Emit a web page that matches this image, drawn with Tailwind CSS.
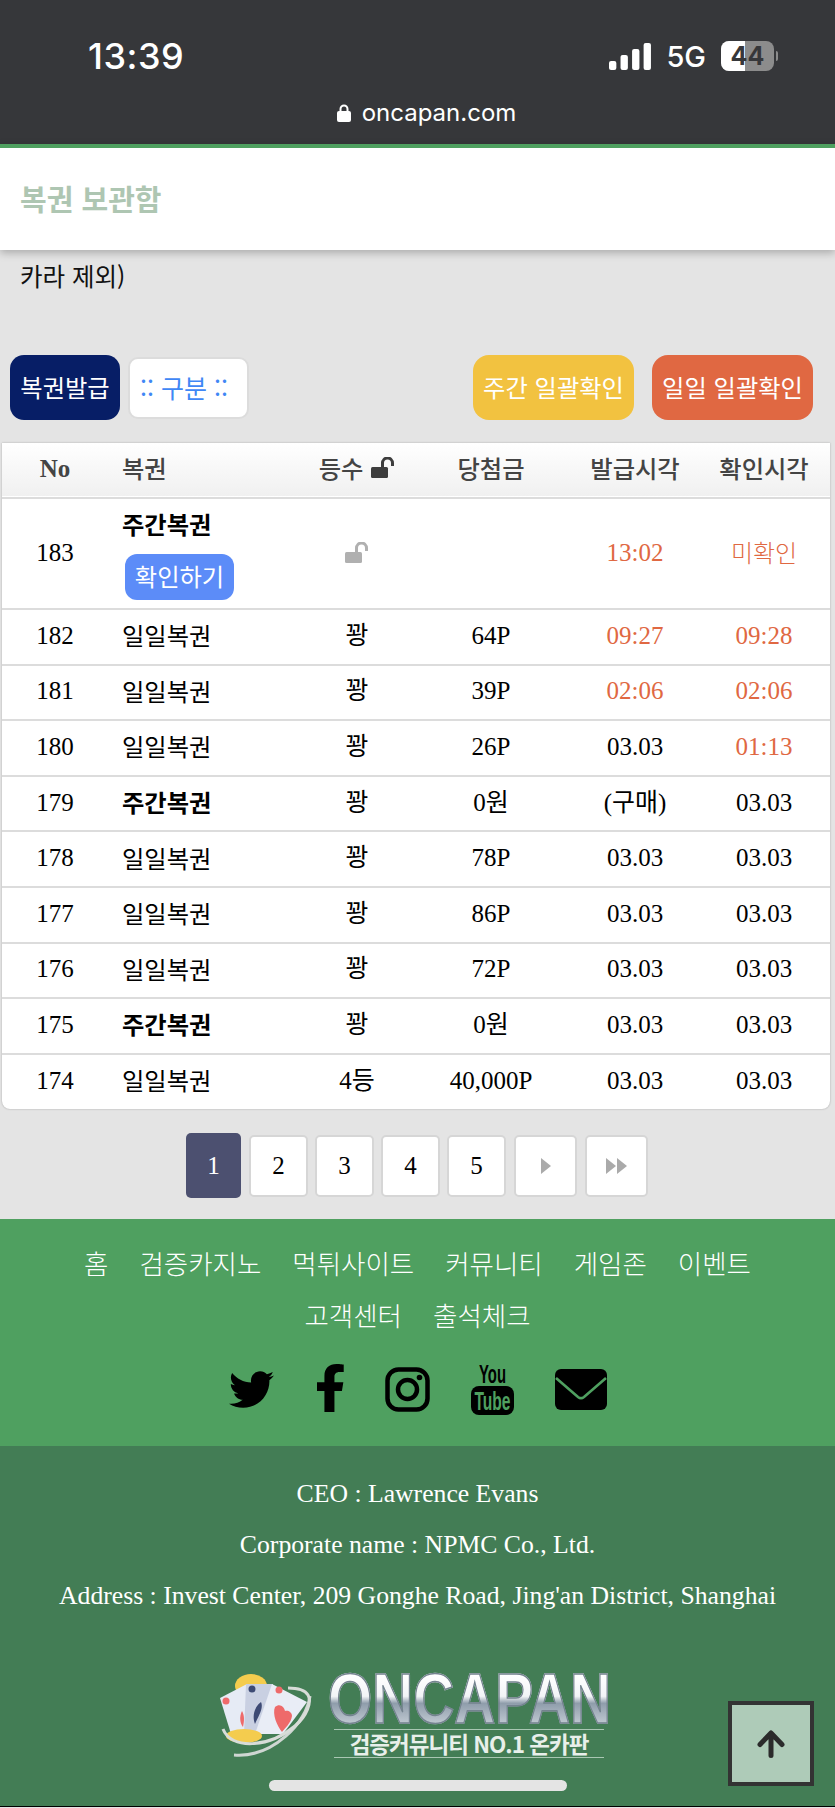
<!DOCTYPE html>
<html lang="ko">
<head>
  <meta charset="UTF-8" />
  <meta name="viewport" content="width=device-width, initial-scale=1.0"/>
  <title>복권 보관함 - 온카판</title>
  <script src="https://cdn.jsdelivr.net/npm/@tailwindcss/browser@4"></script>
</head>
<body class="bg-[#e4e4e4]">
  <div class="relative w-[835px] h-[1808px] overflow-hidden bg-[#e4e4e4] font-['Liberation_Serif','Noto_Sans_CJK_KR',serif] text-[25px] text-black">

    <!-- 상태바 -->
    <div class="h-[144px] bg-[#36373a] text-white font-['Inter','Noto_Sans',sans-serif]">
      <div class="flex items-center justify-between h-[112px] pl-[88px] pr-[57px]">
        <span class="text-[36px] font-medium leading-none tracking-[0.5px]">13:39</span>
        <div class="flex items-center">
          <svg class="w-[43px] h-[27px]" viewBox="0 0 41 27" preserveAspectRatio="none" fill="#fff">
            <rect x="0" y="18" width="7" height="9" rx="2"/>
            <rect x="11" y="12" width="7" height="15" rx="2"/>
            <rect x="22" y="6" width="7" height="21" rx="2"/>
            <rect x="33" y="0" width="7" height="27" rx="2"/>
          </svg>
          <span class="ml-[14px] text-[29px] font-medium leading-none">5G</span>
          <div class="relative ml-[15px] w-[53px] h-[30px] rounded-[8px] overflow-hidden flex bg-[#8c8c8c]">
            <div class="w-[24px] bg-white"></div>
            <span class="absolute inset-0 flex items-center justify-center text-[25px] font-bold leading-none text-[#36373a]">44</span>
          </div>
          <div class="ml-[2px] w-[2px] h-[10px] rounded-r bg-[#8c8c8c]"></div>
        </div>
      </div>
      <div class="flex items-center justify-center gap-[11px] pl-[18px] -mt-[11px]">
        <svg class="w-[14px] h-[18px]" viewBox="0 0 14 18" fill="#fff">
          <rect x="0" y="7" width="14" height="11" rx="2"/>
          <path d="M3.5 8V5a3.5 3.5 0 0 1 7 0v3" fill="none" stroke="#fff" stroke-width="2"/>
        </svg>
        <span class="text-[24px] leading-none font-['Inter',sans-serif]">oncapan.com</span>
      </div>
    </div>

    <!-- 헤더 -->
    <div class="h-[106px] border-t-[4px] border-[#4fa060] bg-white pl-5 flex items-center shadow-[0_3px_8px_rgba(0,0,0,0.25)] relative">
      <h1 class="text-[29px] font-bold leading-none pb-[2px] text-[#aec6b2] font-['Noto_Sans_CJK_KR',sans-serif]">복권 보관함</h1>
    </div>

    <p class="pl-5 mt-[9px] text-[24.5px] leading-[34px] text-[#111] font-['Noto_Sans_CJK_KR',sans-serif]">카라 제외)</p>

    <!-- 버튼 -->
    <div class="flex items-center justify-between pl-[10px] pr-[22px] mt-[62px] font-['Noto_Sans_CJK_KR',sans-serif] text-[24.3px] leading-none">
      <div class="flex items-center gap-[8px]">
        <button class="w-[110px] h-[65px] rounded-[14px] bg-[#071e66] text-white">복권발급</button>
        <button class="w-[121px] h-[62px] pr-[9px] rounded-[10px] bg-white border-2 border-[#dcdcdc] text-[25px] text-[#3f87f5]">:: 구분 ::</button>
      </div>
      <div class="flex items-center gap-[18px]">
        <button class="w-[161px] h-[65px] rounded-[16px] bg-[#f2c240] text-white">주간 일괄확인</button>
        <button class="w-[161px] h-[65px] rounded-[16px] bg-[#e06842] text-white">일일 일괄확인</button>
      </div>
    </div>

    <!-- 목록 -->
    <div class="mx-[2px] mt-[23px] w-[828px] rounded-b-[8px] bg-white overflow-hidden shadow-[0_0_2px_rgba(0,0,0,0.3)]">
      <table class="w-full table-fixed border-collapse text-center leading-none">
        <colgroup>
          <col class="w-[106px]"/><col class="w-[196px]"/><col class="w-[106px]"/><col class="w-[162px]"/><col class="w-[126px]"/><col class="w-[132px]"/>
        </colgroup>
        <thead>
          <tr class="h-[55px] border-b-2 border-[#dcdcdc] bg-gradient-to-b from-white to-[#f0f0f0] text-[#444] font-['Noto_Sans_CJK_KR',sans-serif] text-[24.3px] font-medium [&_th]:pb-[4px]">
            <th class="font-bold font-['Liberation_Serif',serif] text-[25px]">No</th>
            <th class="text-left pl-[14px] font-medium">복권</th>
            <th class="font-medium">
              <span class="inline-flex items-center gap-[8px]">등수
                <svg class="w-[24px] h-[21px]" viewBox="0 0 24 21"><rect x="0" y="10" width="17" height="11" rx="1.5" fill="#3d3d3d"/><path d="M11.5 10V6a5 5 0 0 1 10 0v3" fill="none" stroke="#3d3d3d" stroke-width="3"/></svg>
              </span>
            </th>
            <th class="font-medium">당첨금</th>
            <th class="font-medium">발급시각</th>
            <th class="font-medium">확인시각</th>
          </tr>
        </thead>
        <tbody class="[&_td]:pb-[3px]">
          <tr class="h-[111px] border-b-2 border-[#dcdcdc]">
            <td>183</td>
            <td class="text-left pl-[14px] pt-[8px] font-['Noto_Sans_CJK_KR',sans-serif]">
              <div class="font-bold text-[24.3px] leading-none mb-[17px]">주간복권</div>
              <button class="ml-[3px] w-[109px] h-[46px] rounded-[12px] bg-[#5c8cf8] text-white text-[24.3px] leading-none">확인하기</button>
            </td>
            <td>
              <svg class="inline-block w-[24px] h-[21px] -mt-[4px]" viewBox="0 0 24 21"><rect x="0" y="10" width="17" height="11" rx="1.5" fill="#b0b0b0"/><path d="M11.5 10V6a5 5 0 0 1 10 0v3" fill="none" stroke="#b0b0b0" stroke-width="3"/></svg>
            </td>
            <td></td>
            <td class="text-[#e06842]">13:02</td>
            <td class="text-[#e06842] font-['Noto_Sans_CJK_KR',sans-serif] text-[24px] font-light">미확인</td>
          </tr>
          <tr class="h-[55.6px] border-b-2 border-[#dcdcdc]"><td>182</td><td class="text-left pl-[14px] font-['Noto_Sans_CJK_KR',sans-serif] text-[24.3px]">일일복권</td><td>꽝</td><td>64P</td><td class="text-[#e06842]">09:27</td><td class="text-[#e06842]">09:28</td></tr>
          <tr class="h-[55.6px] border-b-2 border-[#dcdcdc]"><td>181</td><td class="text-left pl-[14px] font-['Noto_Sans_CJK_KR',sans-serif] text-[24.3px]">일일복권</td><td>꽝</td><td>39P</td><td class="text-[#e06842]">02:06</td><td class="text-[#e06842]">02:06</td></tr>
          <tr class="h-[55.6px] border-b-2 border-[#dcdcdc]"><td>180</td><td class="text-left pl-[14px] font-['Noto_Sans_CJK_KR',sans-serif] text-[24.3px]">일일복권</td><td>꽝</td><td>26P</td><td>03.03</td><td class="text-[#e06842]">01:13</td></tr>
          <tr class="h-[55.6px] border-b-2 border-[#dcdcdc]"><td>179</td><td class="text-left pl-[14px] font-['Noto_Sans_CJK_KR',sans-serif] text-[24.3px] font-bold">주간복권</td><td>꽝</td><td>0원</td><td>(구매)</td><td>03.03</td></tr>
          <tr class="h-[55.6px] border-b-2 border-[#dcdcdc]"><td>178</td><td class="text-left pl-[14px] font-['Noto_Sans_CJK_KR',sans-serif] text-[24.3px]">일일복권</td><td>꽝</td><td>78P</td><td>03.03</td><td>03.03</td></tr>
          <tr class="h-[55.6px] border-b-2 border-[#dcdcdc]"><td>177</td><td class="text-left pl-[14px] font-['Noto_Sans_CJK_KR',sans-serif] text-[24.3px]">일일복권</td><td>꽝</td><td>86P</td><td>03.03</td><td>03.03</td></tr>
          <tr class="h-[55.6px] border-b-2 border-[#dcdcdc]"><td>176</td><td class="text-left pl-[14px] font-['Noto_Sans_CJK_KR',sans-serif] text-[24.3px]">일일복권</td><td>꽝</td><td>72P</td><td>03.03</td><td>03.03</td></tr>
          <tr class="h-[55.6px] border-b-2 border-[#dcdcdc]"><td>175</td><td class="text-left pl-[14px] font-['Noto_Sans_CJK_KR',sans-serif] text-[24.3px] font-bold">주간복권</td><td>꽝</td><td>0원</td><td>03.03</td><td>03.03</td></tr>
          <tr class="h-[55.6px]"><td>174</td><td class="text-left pl-[14px] font-['Noto_Sans_CJK_KR',sans-serif] text-[24.3px]">일일복권</td><td>4등</td><td>40,000P</td><td>03.03</td><td>03.03</td></tr>
        </tbody>
      </table>
    </div>

    <!-- 페이지 -->
    <div class="flex items-center pl-[186px] gap-[7px] mt-[24px] text-[25px] leading-none">
      <a class="w-[55px] h-[65px] mr-[1px] flex items-center justify-center rounded-[5px] bg-[#4c5070] text-white">1</a>
      <a class="w-[59px] h-[62px] flex items-center justify-center rounded-[5px] bg-white border-2 border-[#d6d6d6]">2</a>
      <a class="w-[59px] h-[62px] flex items-center justify-center rounded-[5px] bg-white border-2 border-[#d6d6d6]">3</a>
      <a class="w-[59px] h-[62px] flex items-center justify-center rounded-[5px] bg-white border-2 border-[#d6d6d6]">4</a>
      <a class="w-[59px] h-[62px] flex items-center justify-center rounded-[5px] bg-white border-2 border-[#d6d6d6]">5</a>
      <a class="w-[63px] h-[62px] ml-[1px] flex items-center justify-center rounded-[5px] bg-white border-2 border-[#d6d6d6]">
        <svg class="w-[10px] h-[16px]" viewBox="0 0 10 16" fill="#aaa"><path d="M0 0l10 8-10 8z"/></svg>
      </a>
      <a class="w-[63px] h-[62px] ml-[1px] flex items-center justify-center rounded-[5px] bg-white border-2 border-[#d6d6d6]">
        <svg class="w-[21px] h-[16px]" viewBox="0 0 21 16" fill="#aaa"><path d="M0 0l10 8-10 8zM11 0l10 8-10 8z"/></svg>
      </a>
    </div>

    <!-- 푸터 메뉴 -->
    <div class="mt-[21px] h-[227px] bg-[#4fa060] text-white">
      <nav class="pt-[18px] flex flex-wrap justify-center gap-x-[31px] px-[40px] text-[26.5px] leading-[52px] font-light font-['Noto_Sans_CJK_KR',sans-serif]">
        <a>홈</a><a>검증카지노</a><a>먹튀사이트</a><a>커뮤니티</a><a>게임존</a><a>이벤트</a><a class="ml-[60px]">고객센터</a><a class="mr-[60px]">출석체크</a>
      </nav>
      <div class="flex items-center justify-center gap-[41px] pl-[1px] mt-[21px] h-[54px]">
        <svg class="w-[45px] h-[45px] mr-[2px]" viewBox="0 0 512 512" fill="#000"><path d="M459.37 151.716c.325 4.548.325 9.097.325 13.645 0 138.72-105.583 298.558-298.558 298.558-59.452 0-114.68-17.219-161.137-47.106 8.447.974 16.568 1.299 25.34 1.299 49.055 0 94.213-16.568 130.274-44.832-46.132-.975-84.792-31.188-98.112-72.772 6.498.974 12.995 1.624 19.818 1.624 9.421 0 18.843-1.3 27.614-3.573-48.081-9.747-84.143-51.98-84.143-102.985v-1.299c13.969 7.797 30.214 12.67 47.431 13.319-28.264-18.843-46.781-51.005-46.781-87.391 0-19.492 5.197-37.36 14.294-52.954 51.655 63.675 129.3 105.258 216.365 109.807-1.624-7.797-2.599-15.918-2.599-24.04 0-57.828 46.782-104.934 104.934-104.934 30.213 0 57.502 12.67 76.67 33.137 23.715-4.548 46.456-13.32 66.599-25.34-7.798 24.366-24.366 44.833-46.132 57.827 21.117-2.273 41.584-8.122 60.426-16.243-14.292 20.791-32.161 39.308-52.628 54.253z"/></svg>
        <svg class="w-[27px] h-[48px] -mt-[2px]" viewBox="30 0 270 512" preserveAspectRatio="none" fill="#000"><path d="M279.14 288l14.22-92.66h-88.91v-60.13c0-25.35 12.42-50.06 52.24-50.06h40.42V6.26S260.43 0 225.36 0c-73.22 0-121.08 44.38-121.08 124.72v70.62H22.89V288h81.39v224h100.17V288z"/></svg>
        <svg class="w-[45px] h-[45px]" viewBox="0 0 45 45" fill="none" stroke="#000">
          <rect x="2.5" y="2.5" width="40" height="40" rx="11" stroke-width="4.5"/>
          <circle cx="22.5" cy="22.5" r="9.5" stroke-width="4.5"/>
          <circle cx="34.5" cy="10.5" r="2.8" fill="#000" stroke="none"/>
        </svg>
        <svg class="w-[43px] h-[52px] overflow-visible" viewBox="0 0 43 52">
          <text x="21.5" y="20" text-anchor="middle" font-family="Liberation Sans" font-weight="700" font-size="26" textLength="27" lengthAdjust="spacingAndGlyphs" fill="#000">You</text>
          <rect x="0" y="23" width="43" height="29" rx="8" fill="#000"/>
          <text x="21.5" y="47" text-anchor="middle" font-family="Liberation Sans" font-weight="700" font-size="26" textLength="36" lengthAdjust="spacingAndGlyphs" fill="#4fa060">Tube</text>
        </svg>
        <svg class="w-[52px] h-[41px]" viewBox="0 0 52 41">
          <rect width="52" height="41" rx="6" fill="#000"/>
          <path d="M1 9l22 19c2 1.6 4 1.6 6 0L51 9" fill="none" stroke="#4fa060" stroke-width="2.6"/>
        </svg>
      </div>
    </div>

    <!-- 회사 정보 -->
    <div class="relative h-[361px] bg-[#437d55] text-white text-center text-[25.7px] leading-[51px] border-b border-black">
      <div class="pt-[22px]">
        <p>CEO : Lawrence Evans</p>
        <p>Corporate name : NPMC Co., Ltd.</p>
        <p>Address : Invest Center, 209 Gonghe Road, Jing'an District, Shanghai</p>
      </div>
      <!-- 로고 -->
      <div class="flex items-start mt-[53px] pl-[219px] text-left">
        <svg class="w-[95px] h-[85px] shrink-0" viewBox="0 0 95 85">
          <ellipse cx="32" cy="12" rx="16" ry="12" fill="#f4cc4e"/>
          <path d="M1 24L28 10 26 62 12 60z" fill="#e6ebf5"/>
          <path d="M27 10L54 10 42 60 25 60z" fill="#c9d0e2"/>
          <path d="M53 10L88 28 64 60 36 60z" fill="#e9edf6"/>
          <circle cx="7" cy="27" r="3.5" fill="#ee6a6a"/>
          <circle cx="33" cy="15" r="3.5" fill="#3d4a74"/>
          <circle cx="60" cy="16" r="3.5" fill="#ee6a6a"/>
          <path d="M42 28c3 6-3 15-6 22-3-7-1-17 6-22z" fill="#3d4a74"/>
          <path d="M23 37c3 5 2 11 1 16-3-4-4-10-1-16z" fill="#ee6a6a"/>
          <path d="M56 33c5-4 9 0 10 4 3-1 7 1 7 5-1 7-7 12-10 16-5-6-10-18-7-25z" fill="#ee6a6a"/>
          <ellipse cx="25" cy="62" rx="18" ry="7" fill="#f4cc4e"/>
          <path d="M91 22C88 48 54 84 15 81" fill="none" stroke="#cfd6d2" stroke-width="3"/>
          <path d="M4 55C12 76 50 74 76 52c12-10 17-24 13-31-3-5-10-7-20-7" fill="none" stroke="#d8dcd8" stroke-width="3"/>
        </svg>
        <div class="ml-[14px] w-[280px] -mt-[2px]">
          <div class="origin-left scale-x-[0.8] h-[54px] w-[360px] whitespace-nowrap text-[71px] leading-[54px] font-bold font-['Liberation_Sans',sans-serif] bg-[linear-gradient(180deg,#ffffff_5%,#f2f4f7_45%,#8f9dab_58%,#c6ced6_100%)] bg-clip-text text-transparent [-webkit-text-stroke:1.5px_#74838f]">ONCAPAN</div>
          <div class="ml-[6px] mt-[3px] w-[270px] h-[29px] border-y border-[#a9c7b3] text-center text-[22.5px] font-bold leading-[26px] text-[#e8efea] font-['Noto_Sans_CJK_KR',sans-serif] whitespace-nowrap tracking-[-1px]">검증커뮤니티 NO.1 온카판</div>
        </div>
      </div>
      <!-- 위로 버튼 -->
      <button class="absolute left-[728px] top-[255px] w-[86px] h-[85px] border-[4px] border-[#333] bg-[#aecbb8] flex items-center justify-center">
        <svg class="w-[30px] h-[28px]" viewBox="0 0 30 28" fill="none" stroke="#2b2b2b" stroke-width="5" stroke-linecap="round" stroke-linejoin="round"><path d="M15 25.5V4M4 14.5L15 3l11 11.5"/></svg>
      </button>
      <!-- 홈 인디케이터 -->
      <div class="absolute left-[269px] top-[334px] w-[298px] h-[11px] rounded-full bg-[#e4e4e4]"></div>
    </div>
  </div>
</body>
</html>
